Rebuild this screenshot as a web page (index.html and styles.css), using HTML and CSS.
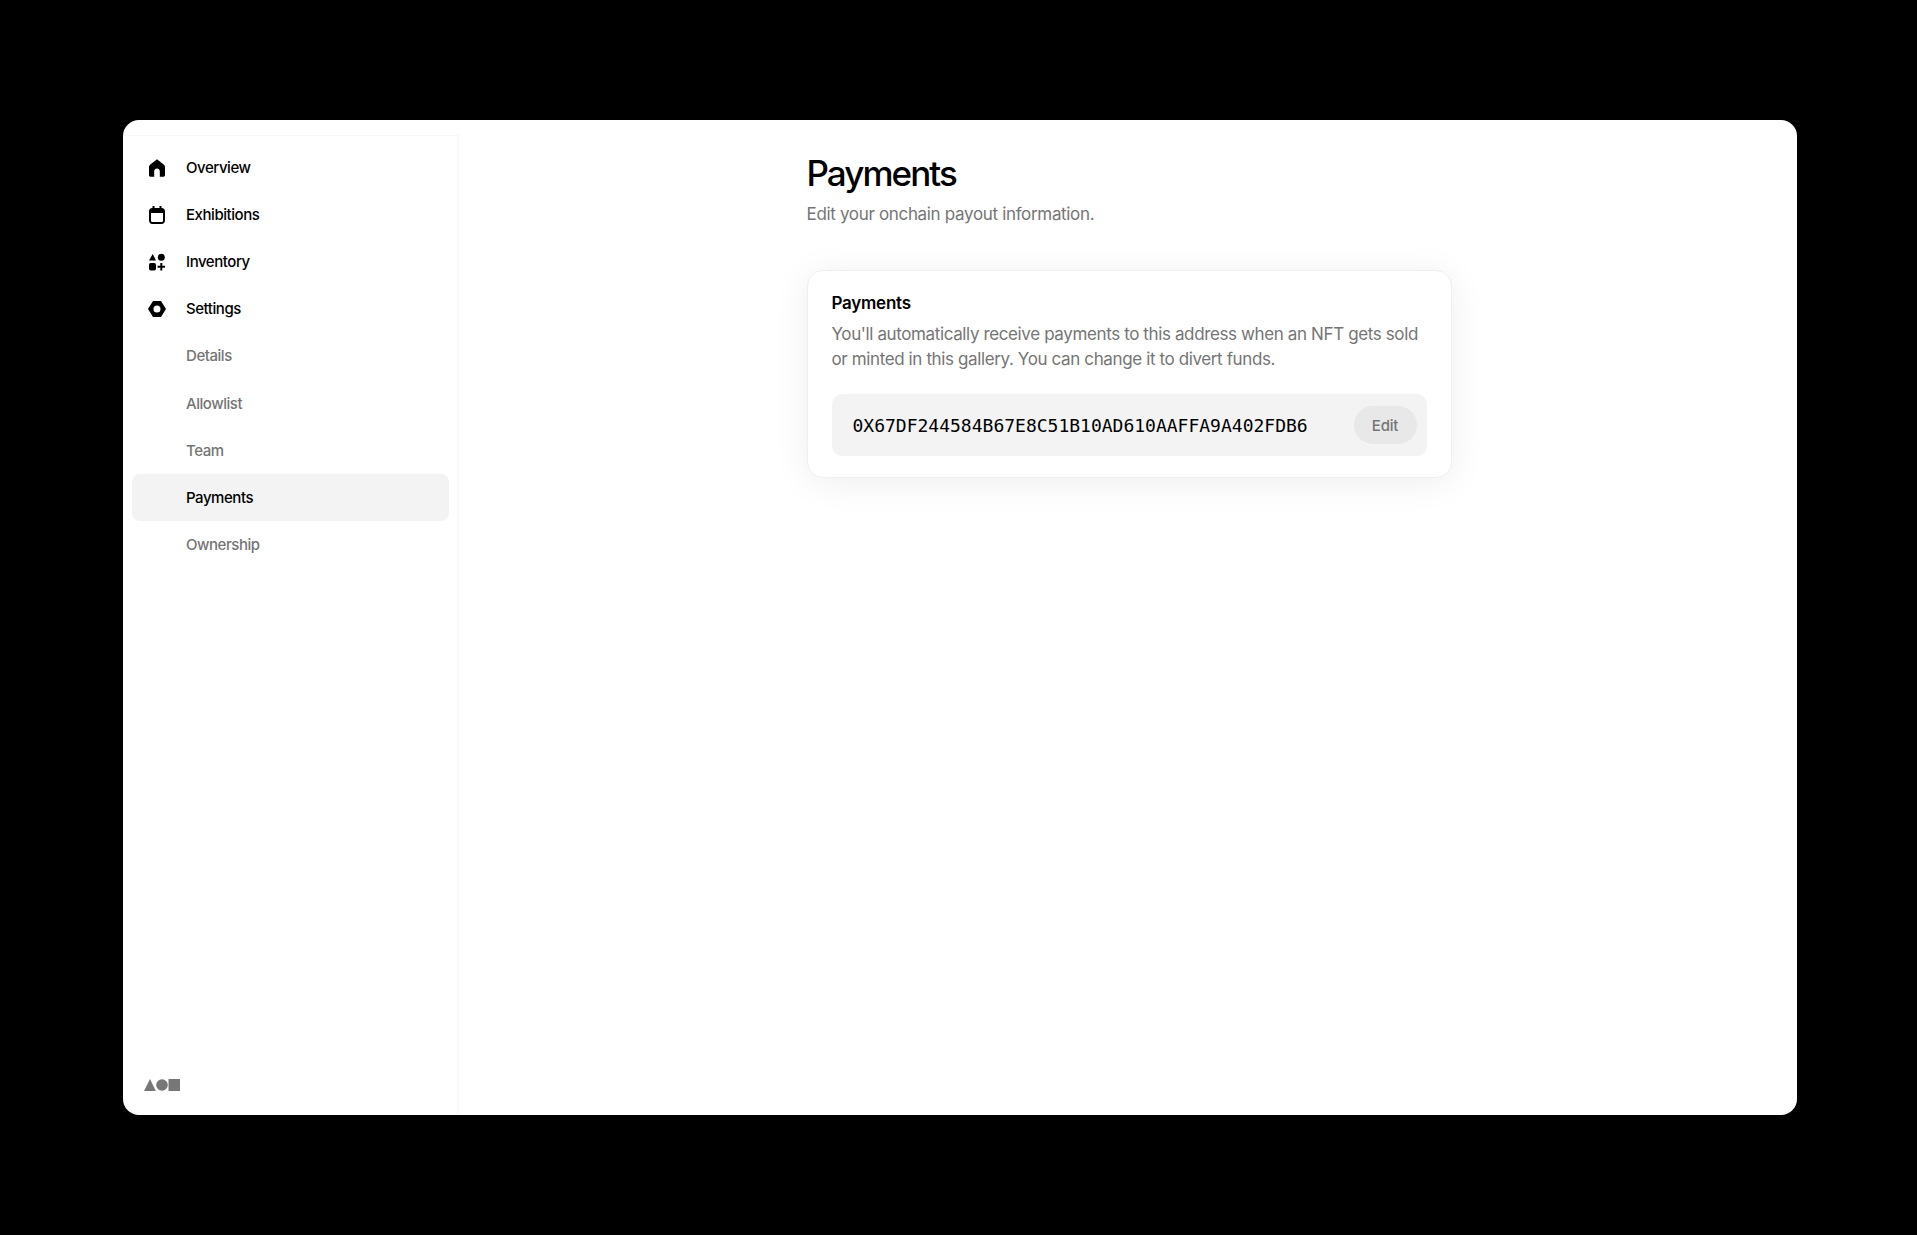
FILE: index.html
```html
<!DOCTYPE html>
<html lang="en">
<head>
  <meta charset="UTF-8">
  <meta name="viewport" content="width=device-width, initial-scale=1.0">
  <title>Payments</title>
  <link rel="stylesheet" href="styles.css">
</head>
<body>
  <div class="window">
    <aside class="sidebar">
      <nav class="nav">
        <a class="nav-item">
          <svg class="nav-icon" viewBox="0 0 18 18">
            <path d="M9 .2 16 5.800c.6.5 1 1.200 1 2V16c0 1-.8 1.800-1.800 1.800H11.800V12.500c0-1.600-1.200-2.900-2.800-2.900S6.200 10.900 6.200 12.500v5.300H2.800C1.800 17.800 1 17 1 16V7.800c0-.8.4-1.500 1-2L9 .2z"/>
          </svg>
          Overview
        </a>
        <a class="nav-item">
          <svg class="nav-icon" viewBox="0 0 18 18">
            <path fill-rule="evenodd" d="M4.500 0h2v2h5V0h2v2h.2C15.700 2 17 3.400 17 5.200v9.400c0 1.900-1.400 3.400-3.300 3.400H4.300C2.400 18 1 16.500 1 14.600V5.200C1 3.400 2.300 2 4.300 2h.2V0zM3 7v7.500c0 .9.500 1.500 1.300 1.500h9.400c.8 0 1.300-.6 1.300-1.500V7H3z"/>
          </svg>
          Exhibitions
        </a>
        <a class="nav-item">
          <svg class="nav-icon" viewBox="0 0 18 18">
            <path d="M4.700 1 8 7.600H1L4.700 1z"/>
            <circle cx="13.300" cy="4.300" r="3.500"/>
            <rect x="1" y="10" width="7" height="7.500" rx="1.800"/>
            <path d="M12.300 10h2v2.800H17v2h-2.700v2.700h-2v-2.700H9.600v-2h2.700V10z"/>
          </svg>
          Inventory
        </a>
        <a class="nav-item">
          <svg class="nav-icon" viewBox="0 0 18 18">
            <path fill-rule="evenodd" d="M5 1h8l5 8-5 8H5L0 9l5-8zm4 4.500a3.500 3.500 0 1 0 0 7 3.500 3.500 0 0 0 0-7z"/>
          </svg>
          Settings
        </a>
        <a class="nav-item sub">Details</a>
        <a class="nav-item sub">Allowlist</a>
        <a class="nav-item sub">Team</a>
        <a class="nav-item sub active">Payments</a>
        <a class="nav-item sub">Ownership</a>
      </nav>
      <svg class="logo" viewBox="0 0 36 12">
        <path d="M6 0l5.800 12H0z"/>
        <circle cx="18" cy="6" r="5.800"/>
        <rect x="24.500" y="0" width="11.500" height="12"/>
      </svg>
    </aside>
    <main class="content">
      <div class="column">
        <h1>Payments</h1>
        <p class="lead">Edit your onchain payout information.</p>
        <section class="card">
          <h2>Payments</h2>
          <p class="card-text">You'll automatically receive payments to this address when an NFT gets sold or minted in this gallery. You can change it to divert funds.</p>
          <div class="address-row">
            <span class="address">0X67DF244584B67E8C51B10AD610AAFFA9A402FDB6</span>
            <button class="edit-btn">Edit</button>
          </div>
        </section>
      </div>
    </main>
  </div>
</body>
</html>
```

FILE: styles.css
```css
html, body {
  height: 100%;
}
body {
  margin: 0;
  padding: 120px 120px 120px 123px;
  box-sizing: border-box;
  background-color: #000;
  color: #000;
  font-family: Inter, "Liberation Sans", sans-serif;
}
.window {
  display: flex;
  height: 100%;
  background: #fff;
  border-radius: 16px;
  overflow: hidden;
}
.sidebar {
  width: 336px;
  flex-shrink: 0;
  display: flex;
  flex-direction: column;
  margin-top: 15px;
  padding: 8px 8px 24px 9px;
  box-sizing: border-box;
  border-top: 1px solid #f7f7f7;
  border-right: 2px solid #f9f9f9;
}
.nav {
  display: flex;
  flex-direction: column;
}
.nav-item {
  display: flex;
  align-items: center;
  height: 47.1px;
  padding-left: 16px;
  border-radius: 8px;
  font-size: 15px;
  font-weight: 500;
  letter-spacing: -0.45px;
}
.nav-item.sub {
  padding-left: 54px;
  color: #757575;
}
.nav-item.active {
  background: #f3f3f3;
  color: #000;
}
.nav-icon {
  width: 18px;
  height: 18px;
  margin-right: 20px;
  fill: #000;
}
.logo {
  width: 36px;
  height: 12px;
  margin-top: auto;
  margin-left: 12px;
  fill: #777;
}
.content {
  flex: 1;
  display: flex;
  justify-content: center;
  padding-left: 2px;
}
.column {
  width: 645px;
  padding-top: 32px;
}
h1 {
  margin: 0;
  font-size: 35px;
  line-height: 42px;
  font-weight: 500;
  letter-spacing: -1.95px;
}
.lead {
  margin: 8px 0 0;
  font-size: 17px;
  line-height: 24px;
  letter-spacing: -0.33px;
  color: #757575;
}
.card {
  margin-top: 44px;
  padding: 20px 24px 21px;
  background: #fff;
  border: 1px solid #efefef;
  border-radius: 16px;
  box-shadow: 0 4px 36px rgba(0, 0, 0, 0.07);
}
h2 {
  margin: 0;
  font-size: 17px;
  line-height: 24px;
  font-weight: 600;
  letter-spacing: -0.25px;
}
.card-text {
  margin: 7px 0 0;
  font-size: 17px;
  line-height: 25px;
  letter-spacing: -0.38px;
  color: #757575;
}
.address-row {
  display: flex;
  align-items: center;
  justify-content: space-between;
  height: 62px;
  margin-top: 22px;
  padding: 0 10px 0 21px;
  background: #f3f3f3;
  border-radius: 10px;
}
.address {
  font-family: "DejaVu Sans Mono", monospace;
  font-size: 18px;
}
.edit-btn {
  width: 63px;
  height: 38px;
  padding: 0;
  border: none;
  border-radius: 19px;
  background: #e8e8e8;
  color: #757575;
  font-family: inherit;
  font-size: 15px;
  font-weight: 500;
  letter-spacing: -0.2px;
}
```
